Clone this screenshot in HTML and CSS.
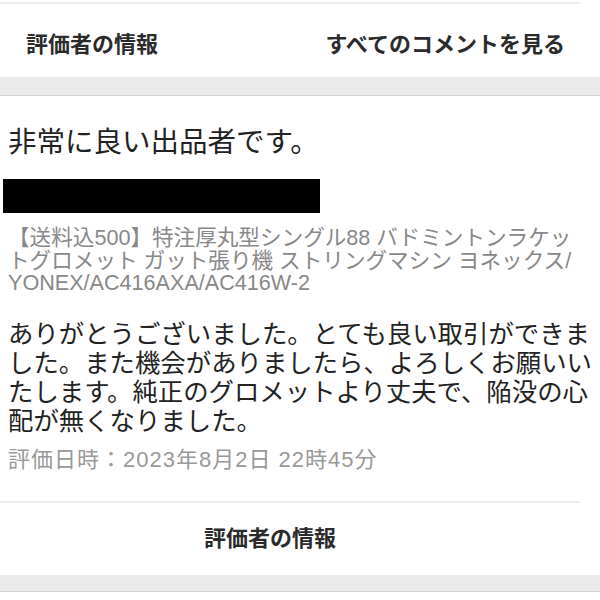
FILE: index.html
```html
<!DOCTYPE html>
<html lang="ja">
<head>
    <meta charset="UTF-8">
    <meta name="viewport" content="width=device-width, initial-scale=1.0">
    <title>評価</title>
    <link rel="stylesheet" href="styles.css">
</head>
<body>
    <div class="tabs">
        <span class="tab">評価者の情報</span>
        <span class="tab">すべてのコメントを見る</span>
    </div>
    <div class="band"></div>

    <div class="review">
        <p class="review-title">非常に良い出品者です。</p>
        <div class="redacted"></div>
        <p class="item-name">【送料込500】特注厚丸型シングル88 バドミントンラケットグロメット ガット張り機 ストリングマシン ヨネックス/<wbr>YONEX/AC416AXA/AC416W-2</p>
        <p class="comment">ありがとうございました。とても良い取引ができました。また機会がありましたら、よろしくお願いいたします。純正のグロメットより丈夫で、陥没の心配が無くなりました。</p>
        <p class="date">評価日時：2023年8月2日 22時45分</p>
    </div>
    <div class="footer-link">評価者の情報</div>
    <div class="band band-small"></div>
</body>
</html>
```

FILE: styles.css
```css
body {
    margin: 0;
    background-color: #fff;
    color: #222;
    font-family: "Liberation Sans", "Noto Sans CJK JP", sans-serif;
}
p {
    margin: 0;
}
.tabs {
    display: flex;
    justify-content: space-between;
    align-items: center;
    height: 70px;
    margin: 2px 20px 0 0;
    padding: 3px 15px 0 26px;
    border-top: 2px solid #ececec;
}
.tab {
    font-size: 22px;
    font-weight: bold;
    color: #2b2b2b;
}
.band {
    height: 18px;
    background-color: #ebebeb;
    border-bottom: 1px solid #d2d2d2;
}
.band-small {
    height: 16px;
}
.review {
    padding: 28px 4px 30px 8px;
}
.review-title {
    font-size: 28.5px;
    line-height: 36px;
}
.redacted {
    width: 317px;
    height: 34px;
    margin: 19px 0 0 -5px;
    background-color: #000;
}
.item-name {
    margin: 14px 8px 0 0;
    font-size: 21.6px;
    line-height: 22.5px;
    color: #888;
}
.comment {
    margin-top: 25.5px;
    font-size: 25.4px;
    line-height: 29px;
}
.date {
    margin-top: 13px;
    font-size: 22px;
    line-height: 22px;
    letter-spacing: 1px;
    color: #999;
}
.footer-link {
    height: 72px;
    line-height: 72px;
    margin-right: 20px;
    padding-right: 40px;
    border-top: 2px solid #ececec;
    text-align: center;
    font-size: 22px;
    font-weight: bold;
    color: #2b2b2b;
}
```
